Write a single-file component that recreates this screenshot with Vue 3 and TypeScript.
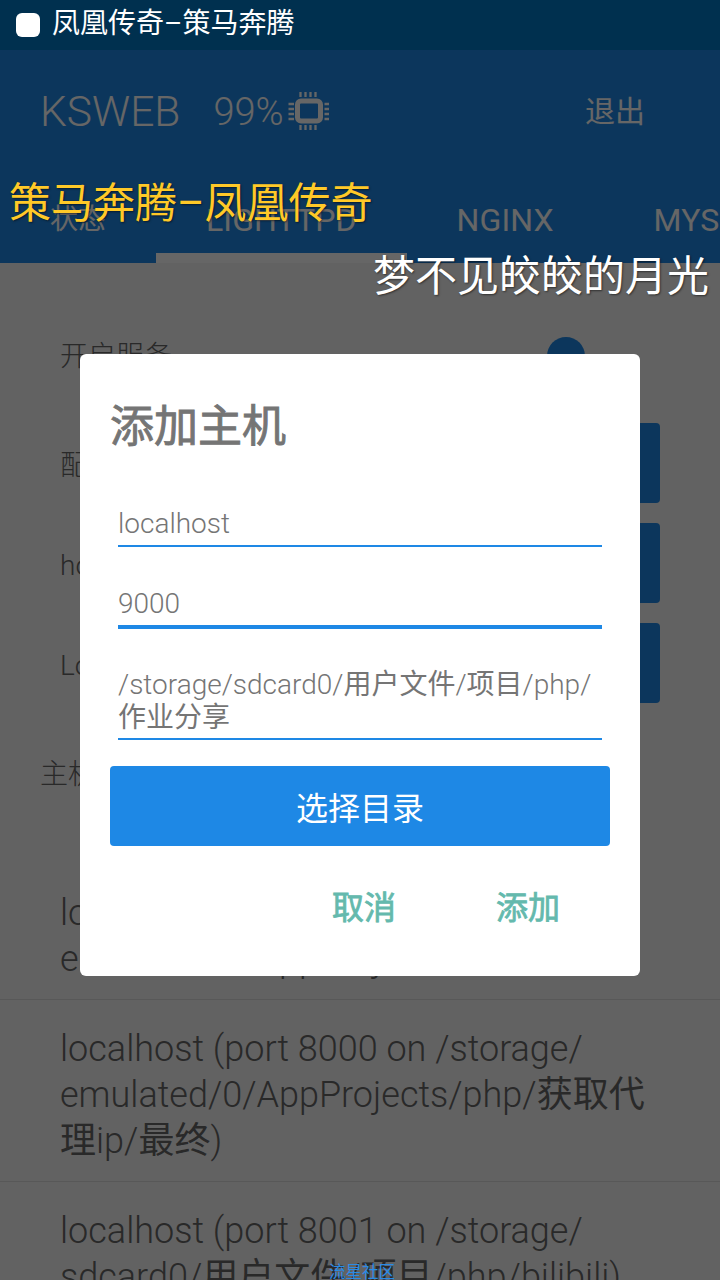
<template>
  <div class="screen">
    <div class="status-bar">
      <span class="status-check"></span>
      <span class="status-title">凤凰传奇–策马奔腾</span>
    </div>

    <header class="app-bar">
      <div class="app-row">
        <span class="brand">KSWEB</span>
        <span class="cpu">99%</span>
        <svg class="chip" viewBox="0 0 40 40" aria-hidden="true">
          <rect x="9" y="10" width="23" height="20" rx="3.5" fill="none" stroke="currentColor" stroke-width="5" />
          <path
            d="M12 1v5M17 1v5M22 1v5M27 1v5M12 34v5M17 34v5M22 34v5M27 34v5M0 13h5.5M0 18h5.5M0 23h5.5M0 28h5.5M36 13h5M36 18h5M36 23h5M36 28h5"
            fill="none"
            stroke="currentColor"
            stroke-width="2.3"
          />
        </svg>
        <span class="quit">退出</span>
      </div>
      <nav class="tabs">
        <span class="tab tab-cjk">状态</span>
        <span class="tab tab-active">LIGHTTPD</span>
        <span class="tab">NGINX</span>
        <span class="tab">MYSQL</span>
      </nav>
    </header>

    <main class="content">
      <div class="setting setting-switch">
        <span class="switch-label">开启服务</span>
        <span class="switch-knob"></span>
      </div>
      <div v-for="row in settingRows" :key="row" class="setting">
        <span>{{ row }}</span>
        <button type="button" class="setting-button">修改</button>
      </div>
      <div class="hosts-label">主机列表</div>
      <ul class="hosts">
        <li v-for="host in hosts" :key="host">
          <span
            v-for="(run, i) in splitRuns(host)"
            :key="i"
            :class="{ cjk: run.cjk }"
          >{{ run.text }}</span>
        </li>
      </ul>
    </main>

    <div class="scrim">
      <section class="dialog">
        <h2 class="dialog-title">添加主机</h2>
        <div class="field">localhost</div>
        <div class="field field-focus">9000</div>
        <div class="field field-path">
          <span
            v-for="(run, i) in splitRuns(projectPath)"
            :key="i"
            :class="{ cjk: run.cjk }"
          >{{ run.text }}</span>
        </div>
        <button type="button" class="pick-button">选择目录</button>
        <div class="dialog-actions">
          <span>取消</span>
          <span>添加</span>
        </div>
      </section>
    </div>

    <div class="lyric lyric-yellow">策马奔腾–凤凰传奇</div>
    <div class="lyric lyric-white">梦不见皎皎的月光</div>
    <div class="watermark">流星社区</div>
  </div>
</template>

<script setup lang="ts">
interface TextRun {
  text: string
  cjk: boolean
}

const settingRows: string[] = ['配置文件', 'hosts文件', 'Log文件']

const projectPath = '/storage/sdcard0/用户文件/项目/php/作业分享'

const hosts: string[] = [
  'localhost (port 8080 on /storage/emulated/0/AppProjects/网站）',
  'localhost (port 8000 on /storage/emulated/0/AppProjects/php/获取代理ip/最终)',
  'localhost (port 8001 on /storage/sdcard0/用户文件/项目/php/bilibili)',
]

// latin is light, chinese regular, and paths may wrap after each slash
function splitRuns(text: string): TextRun[] {
  return text
    .split(/([\u4e00-\u9fff]+)/)
    .filter((part) => part !== '')
    .map((part) => ({
      text: part.replace(/\//g, '/\u200b'),
      cjk: /[\u4e00-\u9fff]/.test(part),
    }))
}
</script>

<style>
html,
body {
  margin: 0;
  background: #f5f5f5;
}
</style>

<style scoped>
.screen {
  position: relative;
  width: 720px;
  height: 1280px;
  overflow: hidden;
  background: #f5f5f5;
  font-family: Roboto, "Noto Sans CJK SC", sans-serif;
  font-weight: 300;
  color: #666;
}

.cjk {
  font-weight: 400;
}

.status-bar {
  position: relative;
  z-index: 3;
  display: flex;
  align-items: center;
  gap: 12px;
  height: 50px;
  padding-left: 16px;
  box-sizing: border-box;
  background: #00304f;
  color: #fff;
}

.status-check {
  width: 24px;
  height: 24px;
  border-radius: 6px;
  background: #fff;
}

.status-title {
  margin-bottom: 3px;
  font-size: 28px;
  line-height: 1;
  font-weight: 400;
}

.app-bar {
  display: flex;
  flex-direction: column;
  height: 213px;
  background: #1e88e5;
  color: #fff;
  font-weight: 400;
}

.app-row {
  display: flex;
  align-items: center;
  height: 122px;
  padding: 0 75px 0 40px;
}

.brand {
  font-size: 42.5px;
  font-weight: 300;
}

.cpu {
  margin-top: 2px;
  margin-left: 33px;
  font-size: 38px;
  font-weight: 300;
}

.chip {
  width: 41px;
  height: 40px;
  margin-left: 4px;
}

.quit {
  margin-bottom: 4px;
  margin-left: auto;
  font-size: 30px;
}

.tabs {
  display: flex;
  flex: 1;
  overflow: hidden;
}

.tab {
  flex: none;
  padding: 28px 50px 0;
  font-size: 32px;
  line-height: 40px;
  letter-spacing: 0.1px;
  box-sizing: border-box;
}

.tab-cjk {
  font-size: 28px;
  letter-spacing: 0;
}

.tab-active {
  border-bottom: 10px solid #fff;
}

.content {
  display: flex;
  flex-direction: column;
}

.setting {
  display: flex;
  align-items: center;
  justify-content: space-between;
  height: 100px;
  padding: 0 60px;
  font-size: 28px;
}

.setting-switch {
  height: 150px;
  padding-top: 36px;
  box-sizing: border-box;
}

.switch-label {
  margin-bottom: 4px;
}

.switch-knob {
  width: 38px;
  height: 38px;
  margin-right: 75px;
  border-radius: 50%;
  background: #1e88e5;
}

.setting-button {
  width: 200px;
  height: 80px;
  border: 0;
  border-radius: 4px;
  background: #1e88e5;
  color: #fff;
  font: inherit;
}

.hosts-label {
  padding: 42px 40px 0;
  font-size: 28px;
  line-height: 40px;
}

.hosts {
  margin: 69px 0 0;
  padding: 0;
  list-style: none;
}

.hosts li {
  padding: 26px 60px 17px;
  font-size: 36px;
  line-height: 46px;
  border-bottom: 1px solid #ddd;
}

.scrim {
  position: absolute;
  inset: 50px 0 0;
  z-index: 1;
  display: flex;
  align-items: center;
  justify-content: center;
  background: rgba(0, 0, 0, 0.6);
}

.dialog {
  width: 560px;
  height: 622px;
  padding: 48px 30px 0;
  box-sizing: border-box;
  border-radius: 6px;
  background: #fff;
  color: #757575;
}

.dialog-title {
  margin: 0 0 54px;
  font-size: 44px;
  line-height: 50px;
  font-weight: 400;
  color: #757575;
  -webkit-text-stroke: 0.9px currentColor;
}

.field {
  margin: 0 8px 39px;
  padding-bottom: 3px;
  border-bottom: 2px solid #1e88e5;
  font-size: 28px;
  line-height: 36px;
  color: #757575;
}

.field-focus {
  border-bottom-width: 4px;
}

.field-path {
  margin-bottom: 26px;
  padding-bottom: 4px;
  line-height: 33px;
}

.pick-button {
  display: block;
  width: 500px;
  height: 80px;
  border: 0;
  border-radius: 4px;
  background: #1e88e5;
  color: #fff;
  font-family: inherit;
  font-size: 32px;
  font-weight: 400;
}

.dialog-actions {
  display: flex;
  justify-content: flex-end;
  gap: 100px;
  margin-top: 42px;
  padding-right: 50px;
  font-size: 32px;
  line-height: 40px;
  font-weight: 400;
  color: #64b9ad;
  -webkit-text-stroke: 0.8px currentColor;
}

.lyric {
  position: absolute;
  z-index: 4;
  line-height: 1;
  font-weight: 400;
  white-space: nowrap;
  text-shadow: 1px 1px 2px rgba(0, 0, 0, 0.5);
}

.lyric-yellow {
  left: 9px;
  top: 183px;
  font-size: 42px;
  color: #ffc928;
}

.lyric-white {
  left: 373px;
  top: 256px;
  font-size: 42px;
  color: #fff;
}

.watermark {
  position: absolute;
  left: 329px;
  top: 1265px;
  z-index: 4;
  font-size: 16.5px;
  line-height: 1;
  color: #2a8be6;
  font-weight: 400;
}
</style>
